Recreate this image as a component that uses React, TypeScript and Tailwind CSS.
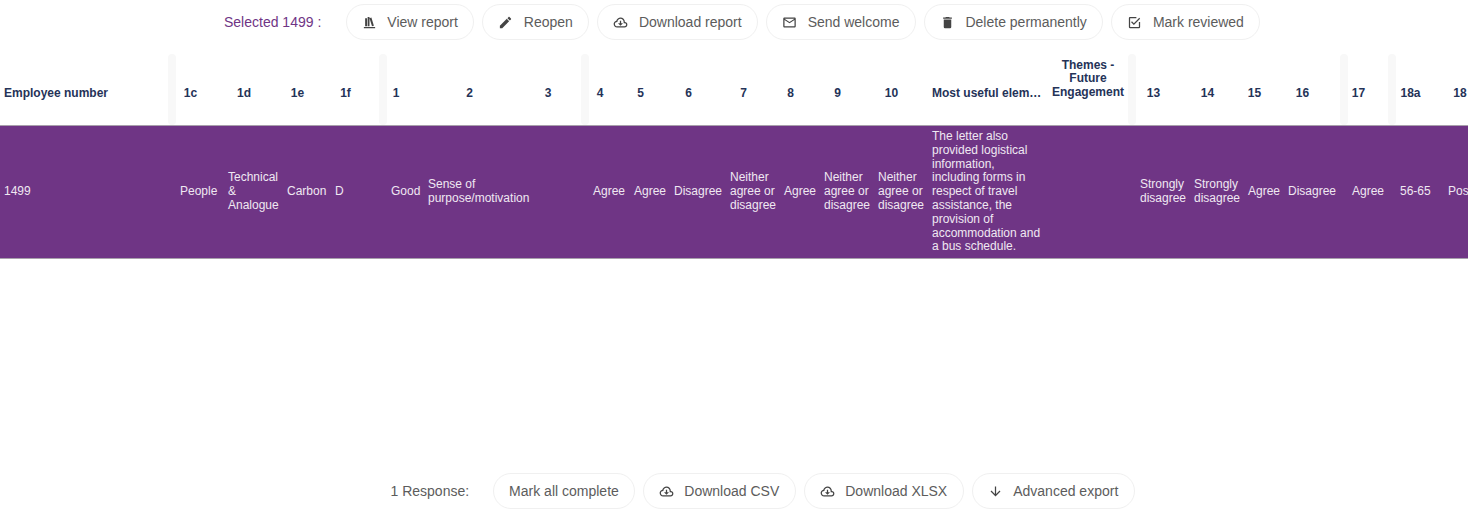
const P = {
  shelf: "M9 3V18H12V3H9M12 5L16 18L19 17L15 4L12 5M5 5V18H8V5H5M3 19V21H21V19H3Z",
  pencil: "M20.71,7.04C21.1,6.65 21.1,6 20.71,5.63L18.37,3.29C18,2.9 17.35,2.9 16.96,3.29L15.12,5.12L18.87,8.87M3,17.25V21H6.75L17.81,9.93L14.06,6.18L3,17.25Z",
  cloud: "M6.5 20Q4.22 20 2.61 18.43 1 16.85 1 14.58 1 12.63 2.17 11.1 3.35 9.57 5.25 9.15 5.88 6.85 7.75 5.43 9.63 4 12 4 14.93 4 16.96 6.04 19 8.07 19 11 20.73 11.2 21.86 12.5 23 13.78 23 15.5 23 17.38 21.69 18.69 20.38 20 18.5 20H6.5M6.5 18H18.5Q19.55 18 20.27 17.27 21 16.55 21 15.5 21 14.45 20.27 13.73 19.55 13 18.5 13H17V11Q17 8.93 15.54 7.46 14.08 6 12 6 9.93 6 8.46 7.46 7 8.93 7 11H6.5Q5.05 11 4.03 12.03 3 13.05 3 14.5 3 15.95 4.03 17 5.05 18 6.5 18M12 17L8 13H11V9H13V13H16L12 17Z",
  mail: "M22 6C22 4.9 21.1 4 20 4H4C2.9 4 2 4.9 2 6V18C2 19.1 2.9 20 4 20H20C21.1 20 22 19.1 22 18V6M20 6L12 11L4 6H20M20 18H4V8L12 13L20 8V18Z",
  trash: "M19,4H15.5L14.5,3H9.5L8.5,4H5V6H19M6,19A2,2 0 0,0 8,21H16A2,2 0 0,0 18,19V7H6V19Z",
  check: "M19,19H5V5H15V3H5C3.89,3 3,3.89 3,5V19A2,2 0 0,0 5,21H19A2,2 0 0,0 21,19V11H19M7.91,10.08L6.5,11.5L11,16L21,6L19.59,4.58L11,13.17L7.91,10.08Z",
  down: "M11,4H13V16L18.5,10.5L19.92,11.92L12,19.84L4.08,11.92L5.5,10.5L11,16V4Z",
};

function Pill({ icon, label }: { icon?: string; label: string }) {
  return (
    <button
      className={
        icon
          ? "flex h-9 items-center gap-[10.5px] rounded-full border border-[#f0f0f0] bg-white pl-[15px] pr-[15.5px] text-[14px] text-[#5c5c5c]"
          : "flex h-9 items-center rounded-full border border-[#f0f0f0] bg-white px-[15px] text-[14px] text-[#5c5c5c]"
      }
    >
      {icon && (
        <svg viewBox="0 0 24 24" className="h-[15px] w-[15px] shrink-0" fill="#444444">
          <path d={icon} />
        </svg>
      )}
      <span>{label}</span>
    </button>
  );
}

type Col =
  | { sep: number }
  | { w: number; head: string; cell: string; left?: boolean; wrapHead?: boolean; tight?: boolean };

const cols: Col[] = [
  { w: 168, head: "Employee number", cell: "1499", left: true },
  { sep: 8 },
  { w: 48, head: "1c", cell: "People" },
  { w: 59, head: "1d", cell: "Technical & Analogue" },
  { w: 48, head: "1e", cell: "Carbon" },
  { w: 48, head: "1f", cell: "D" },
  { sep: 8 },
  { w: 37, head: "1", cell: "Good" },
  { w: 110, head: "2", cell: "Sense of purpose/motivation" },
  { w: 47, head: "3", cell: "" },
  { sep: 8 },
  { w: 41, head: "4", cell: "Agree" },
  { w: 40, head: "5", cell: "Agree" },
  { w: 56, head: "6", cell: "Disagree" },
  { w: 54, head: "7", cell: "Neither agree or disagree" },
  { w: 40, head: "8", cell: "Agree" },
  { w: 54, head: "9", cell: "Neither agree or disagree" },
  { w: 54, head: "10", cell: "Neither agree or disagree" },
  {
    w: 116,
    head: "Most useful elem…",
    cell: "The letter also provided logistical information, including forms in respect of travel assistance, the provision of accommodation and a bus schedule.",
    left: true,
    tight: true,
  },
  { w: 84, head: "Themes - Future Engagement", cell: "", wrapHead: true },
  { sep: 8 },
  { w: 54, head: "13", cell: "Strongly disagree" },
  { w: 54, head: "14", cell: "Strongly disagree" },
  { w: 40, head: "15", cell: "Agree" },
  { w: 56, head: "16", cell: "Disagree" },
  { sep: 8 },
  { w: 40, head: "17", cell: "Agree" },
  { sep: 8 },
  { w: 48, head: "18a", cell: "56-65" },
  { w: 51, head: "18", cell: "Positive" },
];

const tableWidth = cols.reduce((s, c) => s + ("sep" in c ? c.sep : c.w), 0);

export default function App() {
  return (
    <div className="h-[513px] w-full overflow-hidden bg-white font-['Liberation_Sans',Arial,sans-serif]">
      <div className="flex h-[54px] items-start pl-[224px] pt-1">
        <span className="mr-[24.5px] flex h-9 items-center text-[14px] text-[#6f3585]">Selected 1499 :</span>
        <div className="flex gap-2">
          <Pill icon={P.shelf} label="View report" />
          <Pill icon={P.pencil} label="Reopen" />
          <Pill icon={P.cloud} label="Download report" />
          <Pill icon={P.mail} label="Send welcome" />
          <Pill icon={P.trash} label="Delete permanently" />
          <Pill icon={P.check} label="Mark reviewed" />
        </div>
      </div>

      <table
        className="table-fixed border-separate border-spacing-0 text-[12px] leading-[13.8px]"
        style={{ width: tableWidth }}
      >
        <colgroup>
          {cols.map((c, i) => (
            <col key={i} style={{ width: "sep" in c ? c.sep : c.w }} />
          ))}
        </colgroup>
        <thead>
          <tr className="h-[71px]">
            {cols.map((c, i) =>
              "sep" in c ? (
                <th key={i} className="rounded-[4px] bg-[#f8f8f8] p-0" />
              ) : (
                <th key={i} className="p-0 pb-[24px] align-bottom font-bold text-[#253358]">
                  {c.left ? (
                    <div className="truncate pl-1 text-left">{c.head}</div>
                  ) : c.wrapHead ? (
                    <div className="pb-px pl-2 pr-1 text-center">{c.head}</div>
                  ) : (
                    <div className="flex justify-center whitespace-nowrap">
                      <span>{c.head}</span>
                      <span className="w-[19px] shrink-0" />
                    </div>
                  )}
                </th>
              )
            )}
          </tr>
        </thead>
        <tbody>
          <tr>
            {cols.map((c, i) => (
              <td
                key={i}
                className={
                  "sep" in c || !c.tight
                    ? "border-y border-[#a8a0ac] bg-[#6f3585] p-1 align-middle text-[#efe8f2]"
                    : "border-y border-[#a8a0ac] bg-[#6f3585] py-1 pl-1 pr-0 align-middle text-[#efe8f2]"
                }
              >
                {"sep" in c ? null : c.cell}
              </td>
            ))}
          </tr>
        </tbody>
      </table>

      <div className="mt-[214px] flex items-center pl-[390.5px]">
        <span className="mr-6 text-[14px] text-[#5c5c5c]">1 Response:</span>
        <div className="flex gap-2">
          <Pill label="Mark all complete" />
          <Pill icon={P.cloud} label="Download CSV" />
          <Pill icon={P.cloud} label="Download XLSX" />
          <Pill icon={P.down} label="Advanced export" />
        </div>
      </div>
    </div>
  );
}
